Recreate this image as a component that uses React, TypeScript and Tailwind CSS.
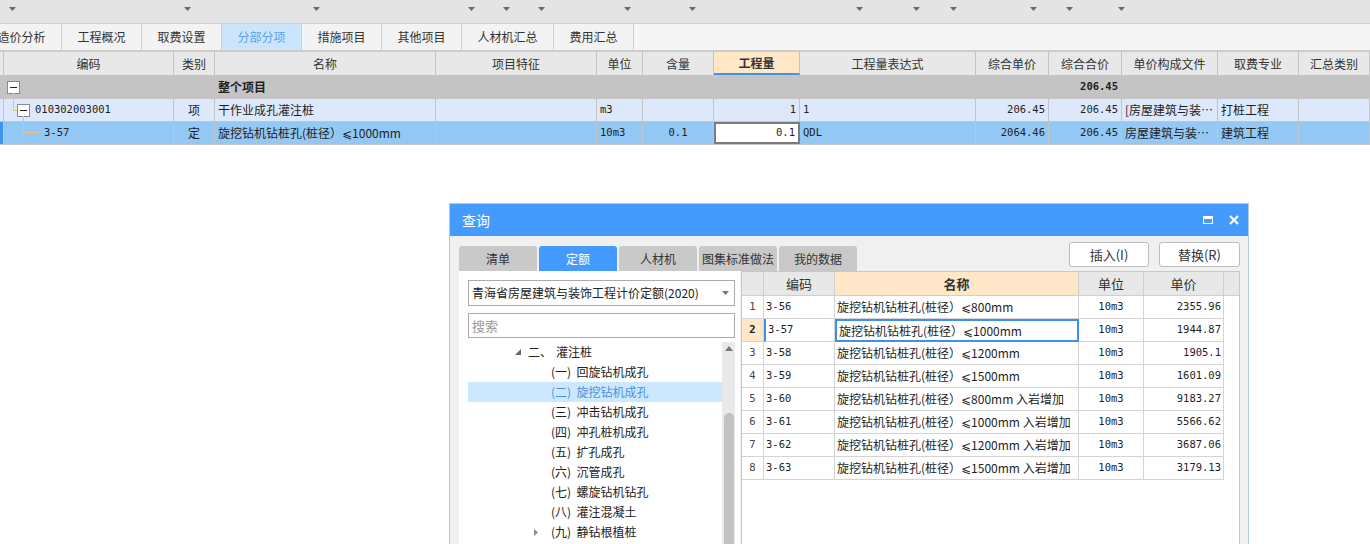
import React from "react";

const ui = "font-['Noto_Sans_CJK_SC','DejaVu_Sans',sans-serif]";
const mono = "font-['DejaVu_Sans_Mono','Noto_Sans_CJK_SC',monospace]";

// dropdown carets along the top toolbar (centre x)
const caretPos = [12, 187, 316, 471, 506, 541, 627, 692, 859, 916, 953, 1033, 1069, 1121];

const topTabs = [
    { t: "造价分析", w: "w-[80px] -ml-[18px]" },
    { t: "工程概况", w: "w-[80px]" },
    { t: "取费设置", w: "w-[80px]" },
    { t: "分部分项", w: "w-[80px]", active: true },
    { t: "措施项目", w: "w-[80px]" },
    { t: "其他项目", w: "w-[80px]" },
    { t: "人材机汇总", w: "w-[92px]" },
    { t: "费用汇总", w: "w-[80px]" },
];

const colW = [
    "w-[4px]", "w-[170px]", "w-[41px]", "w-[221px]", "w-[161px]", "w-[46px]", "w-[71px]",
    "w-[86px]", "w-[176px]", "w-[73px]", "w-[73px]", "w-[96px]", "w-[81px]", "w-[71px]",
];

const heads = [
    "", "编码", "类别", "名称", "项目特征", "单位", "含量", "工程量", "工程量表达式",
    "综合单价", "综合合价", "单价构成文件", "取费专业", "汇总类别",
];

type Cell = {
    c?: React.ReactNode;
    a?: "l" | "c" | "r";
    m?: boolean;
    box?: boolean;
    cls?: string;
};

const treeItems = [
    { t: "(一) 回旋钻机成孔" },
    { t: "(二) 旋挖钻机成孔", sel: true },
    { t: "(三) 冲击钻机成孔" },
    { t: "(四) 冲孔桩机成孔" },
    { t: "(五) 扩孔成孔" },
    { t: "(六) 沉管成孔" },
    { t: "(七) 螺旋钻机钻孔" },
    { t: "(八) 灌注混凝土" },
    { t: "(九) 静钻根植桩", closed: true },
];

const dinge = [
    ["3-56", "旋挖钻机钻桩孔(桩径）⩽800mm", "10m3", "2355.96"],
    ["3-57", "旋挖钻机钻桩孔(桩径）⩽1000mm", "10m3", "1944.87"],
    ["3-58", "旋挖钻机钻桩孔(桩径）⩽1200mm", "10m3", "1905.1"],
    ["3-59", "旋挖钻机钻桩孔(桩径）⩽1500mm", "10m3", "1601.09"],
    ["3-60", "旋挖钻机钻桩孔(桩径）⩽800mm 入岩增加", "10m3", "9183.27"],
    ["3-61", "旋挖钻机钻桩孔(桩径）⩽1000mm 入岩增加", "10m3", "5566.62"],
    ["3-62", "旋挖钻机钻桩孔(桩径）⩽1200mm 入岩增加", "10m3", "3687.06"],
    ["3-63", "旋挖钻机钻桩孔(桩径）⩽1500mm 入岩增加", "10m3", "3179.13"],
];

const Caret = ({ color = "#6b6b6b" }: { color?: string }) => (
    <svg width="7" height="4" viewBox="0 0 7 4" className="shrink-0">
        <path d="M0 0h7L3.5 4z" fill={color} />
    </svg>
);

const MinusBox = ({ className = "" }: { className?: string }) => (
    <div className={`w-[13px] h-[13px] shrink-0 border border-[#8a8a8a] bg-white flex items-center justify-center ${className}`}>
        <div className="w-[7px] h-px bg-[#222]" />
    </div>
);

const DataRow = ({ bg, cells }: { bg: string; cells: Cell[] }) => (
    <div className={`flex h-[23px] border-b border-[#c4c4c4] ${bg}`}>
        {cells.map((c, i) => (
            <div
                key={i}
                className={`${colW[i]} shrink-0 relative flex items-center overflow-hidden whitespace-nowrap text-[#1e1e1e] ${
                    i === 0 ? "px-0" : "px-[3px]"
                } ${c.box ? "border-2 border-[#7b7b7b] bg-white" : "border-r border-[#c4c4c4]"} ${
                    c.a === "r" ? "justify-end" : c.a === "c" ? "justify-center" : "justify-start"
                } ${c.m ? `${mono} text-[10.5px]` : `${ui} text-[12px]`} ${c.cls ?? ""}`}
            >
                {c.c}
            </div>
        ))}
    </div>
);

export default function App() {
    return (
        <div className={`relative w-[1370px] h-[544px] overflow-hidden bg-white ${ui}`}>
            {/* toolbar strip */}
            <div className="h-[24px] bg-[#e4e4e4] border-b border-[#d3d3d3] flex items-start pt-[7px]">
                {caretPos.map((x, i) => (
                    <div key={i} className="flex" style={{ marginLeft: i === 0 ? x - 3.5 : x - caretPos[i - 1] - 7 }}>
                        <Caret />
                    </div>
                ))}
            </div>

            {/* page tabs */}
            <div className="h-[28px] bg-[#f5f5f5] border-b-2 border-[#cdcdcd] flex">
                {topTabs.map((tab) => (
                    <div
                        key={tab.t}
                        className={`${tab.w} shrink-0 h-full flex items-center justify-center border-r border-[#cfcfcf] text-[12px] ${
                            tab.active ? "bg-[#cbe5fc] text-[#5ba2ea]" : "bg-[#f3f3f3] text-[#333]"
                        }`}
                    >
                        {tab.t}
                    </div>
                ))}
            </div>

            {/* grid header */}
            <div className="flex h-[24px] bg-[#e8e8e8] border-b border-[#c4c4c4]">
                {heads.map((h, i) => (
                    <div
                        key={i}
                        className={`${colW[i]} shrink-0 border-r border-[#c4c4c4] flex items-center justify-center text-[12px] text-[#333] ${
                            i === 7 ? "bg-[#ffe7c7] font-bold border-b-2 border-b-[#3d95ef]" : ""
                        }`}
                    >
                        {h}
                    </div>
                ))}
            </div>

            <DataRow
                bg="bg-[#c4c4c4]"
                cells={[
                    {},
                    {
                        c: (
                            <>
                                <MinusBox />
                                <div className="absolute left-[9px] top-[17px] bottom-0 w-px bg-[#f2bf78]" />
                            </>
                        ),
                    },
                    {},
                    { c: "整个项目", cls: "font-bold" },
                    {}, {}, {}, {}, {}, {},
                    { c: "206.45", a: "r", m: true, cls: "font-bold" },
                    {}, {}, {},
                ]}
            />
            <DataRow
                bg="bg-[#dde9fb]"
                cells={[
                    {},
                    {
                        c: (
                            <>
                                <div className="absolute left-[9px] top-0 h-[11px] w-px bg-[#f2bf78]" />
                                <div className="absolute left-[9px] top-[11px] w-[4px] h-px bg-[#f2bf78]" />
                                <MinusBox className="ml-[10px]" />
                                <div className="absolute left-[19px] top-[17px] bottom-0 w-px bg-[#f2bf78]" />
                                <span className={`${mono} text-[10.5px] ml-[5px]`}>010302003001</span>
                            </>
                        ),
                    },
                    { c: "项", a: "c" },
                    { c: "干作业成孔灌注桩" },
                    {},
                    { c: "m3", m: true },
                    {},
                    { c: "1", a: "r", m: true },
                    { c: "1", m: true },
                    { c: "206.45", a: "r", m: true },
                    { c: "206.45", a: "r", m: true },
                    { c: "[房屋建筑与装…" },
                    { c: "打桩工程" },
                    {},
                ]}
            />
            <DataRow
                bg="bg-[#93c8f5]"
                cells={[
                    { cls: "border-l-[3px] border-l-[#3d95ef]" },
                    {
                        c: (
                            <>
                                <div className="absolute left-[19px] top-0 h-[10px] w-px bg-[#f2bf78]" />
                                <div className="absolute left-[19px] top-[10px] w-[17px] h-px bg-[#f2bf78]" />
                                <span className={`${mono} text-[10.5px] ml-[37px]`}>3-57</span>
                            </>
                        ),
                    },
                    { c: "定", a: "c" },
                    { c: "旋挖钻机钻桩孔(桩径）⩽1000mm" },
                    {},
                    { c: "10m3", m: true },
                    { c: "0.1", a: "c", m: true },
                    { c: "0.1", a: "r", m: true, box: true },
                    { c: "QDL", m: true },
                    { c: "2064.46", a: "r", m: true },
                    { c: "206.45", a: "r", m: true },
                    { c: "房屋建筑与装…" },
                    { c: "建筑工程" },
                    {},
                ]}
            />

            {/* 查询 dialog */}
            <div className="absolute left-[449px] top-[203px] w-[800px] h-[360px] border border-[#b9c9de] bg-[#f0f0f0] flex flex-col">
                <div className="h-[32px] shrink-0 bg-[#459bfd] flex items-center pl-[12px] pr-[9px] text-white text-[14px]">
                    <span>查询</span>
                    <div className="ml-auto flex items-center gap-[16px]">
                        <div className="w-[10px] h-[8px] border-[1.5px] border-t-[3px] border-white" />
                        <svg width="10" height="10" viewBox="0 0 10 10">
                            <path d="M1 1l8 8M9 1l-8 8" stroke="white" strokeWidth="2.2" />
                        </svg>
                    </div>
                </div>

                <div className="h-[35px] shrink-0 flex pl-[9px] pr-[8px]">
                    <div className="flex items-end gap-[2px]">
                        {["清单", "定额", "人材机", "图集标准做法", "我的数据"].map((t) => (
                            <div
                                key={t}
                                className={`w-[78px] h-[25px] rounded-t-[3px] flex items-center justify-center text-[12px] ${
                                    t === "定额" ? "bg-[#459bfd] text-white" : "bg-[#c9c9c9] text-[#333]"
                                }`}
                            >
                                {t}
                            </div>
                        ))}
                    </div>
                    <div className="ml-auto mt-[6px] flex gap-[10px]">
                        <div className="w-[80px] h-[25px] bg-white border border-[#bdbdbd] rounded-[3px] flex items-center justify-center text-[13px] text-[#333]">
                            插入(I)
                        </div>
                        <div className="w-[81px] h-[25px] bg-white border border-[#bdbdbd] rounded-[3px] flex items-center justify-center text-[13px] text-[#333]">
                            替换(R)
                        </div>
                    </div>
                </div>

                <div className="flex flex-1 pl-[9px] pr-[8px]">
                    {/* left: library + chapter tree */}
                    <div className="w-[281px] shrink-0 bg-white flex flex-col pl-[9px] pr-[5px] pt-[9px]">
                        <div className="h-[26px] border border-[#ababab] flex items-center pl-[3px] pr-[5px] text-[12px] text-[#222]">
                            <span>青海省房屋建筑与装饰工程计价定额(2020)</span>
                            <div className="ml-auto flex">
                                <Caret color="#777" />
                            </div>
                        </div>
                        <div className="mt-[7px] h-[25px] border border-[#ababab] flex items-center pl-[3px] text-[13px] text-[#9a9a9a]">
                            搜索
                        </div>
                        <div className="mt-[4px] flex flex-1">
                            <div className="flex-1">
                                <div className="h-[20px] flex items-center text-[12px] text-[#222]">
                                    <svg width="6" height="6" viewBox="0 0 6 6" className="ml-[47px]">
                                        <path d="M6 0v6H0z" fill="#666" />
                                    </svg>
                                    <span className="ml-[7px]">二、</span>
                                    <span className="ml-[4px]">灌注桩</span>
                                </div>
                                {treeItems.map((it) => (
                                    <div
                                        key={it.t}
                                        className={`h-[20px] flex items-center text-[12px] whitespace-pre ${
                                            it.sel ? "bg-[#cce8ff] text-[#4a90e2]" : "text-[#222]"
                                        }`}
                                    >
                                        {it.closed ? (
                                            <svg width="4" height="7" viewBox="0 0 4 7" className="ml-[66px] mr-[13px]">
                                                <path d="M0 0l4 3.5L0 7z" fill="#8a8a8a" />
                                            </svg>
                                        ) : (
                                            <span className="w-[83px] shrink-0" />
                                        )}
                                        {it.t.replace(") ", ")  ")}
                                    </div>
                                ))}
                            </div>
                            <div className="w-[13px] shrink-0 bg-[#e9e9e9] flex flex-col items-center">
                                <svg width="8" height="5" viewBox="0 0 8 5" className="mt-[4px]">
                                    <path d="M0 5L4 0l4 5z" fill="#777" />
                                </svg>
                                <div className="mt-[62px] w-[10px] flex-1 bg-[#c2c2c2] rounded-t-[5px]" />
                            </div>
                        </div>
                    </div>

                    {/* right: quota list */}
                    <div className="flex-1 ml-[1px] bg-white border border-[#c8c8c8]">
                        <div className="flex h-[24px] bg-[#e8e8e8] border-b border-[#cfcfcf] text-[13px] text-[#333]">
                            <div className="w-[22px] shrink-0 border-r border-[#cfcfcf]" />
                            <div className="w-[71px] shrink-0 border-r border-[#cfcfcf] flex items-center justify-center">编码</div>
                            <div className="w-[244px] shrink-0 border-r border-[#cfcfcf] bg-[#ffe7c7] font-bold flex items-center justify-center">名称</div>
                            <div className="w-[65px] shrink-0 border-r border-[#cfcfcf] flex items-center justify-center">单位</div>
                            <div className="w-[80px] shrink-0 border-r border-[#cfcfcf] flex items-center justify-center">单价</div>
                        </div>
                        {dinge.map((r, i) => {
                            const sel = i === 1;
                            return (
                                <div key={r[0]} className="flex h-[23px] text-[#1e1e1e]">
                                    <div
                                        className={`w-[22px] shrink-0 border-r border-b border-[#d4d4d4] flex items-center justify-center ${mono} text-[10.5px] ${
                                            sel ? "bg-[#ffe7c7] font-bold text-[#222]" : "text-[#444]"
                                        }`}
                                    >
                                        {i + 1}
                                    </div>
                                    <div
                                        className={`w-[71px] shrink-0 border-r border-b border-[#d4d4d4] flex items-center px-[2px] ${mono} text-[10.5px] ${
                                            sel ? "border-l-2 border-l-[#3d8ff0]" : ""
                                        }`}
                                    >
                                        {r[0]}
                                    </div>
                                    <div
                                        className={`w-[244px] shrink-0 flex items-center px-[2px] text-[12px] whitespace-nowrap overflow-hidden ${
                                            sel ? "border-2 border-[#3d8ff0]" : "border-r border-b border-[#d4d4d4]"
                                        }`}
                                    >
                                        {r[1]}
                                    </div>
                                    <div className={`w-[65px] shrink-0 border-r border-b border-[#d4d4d4] flex items-center justify-center ${mono} text-[10.5px]`}>
                                        {r[2]}
                                    </div>
                                    <div className={`w-[80px] shrink-0 border-r border-b border-[#d4d4d4] flex items-center justify-end px-[2px] ${mono} text-[10.5px]`}>
                                        {r[3]}
                                    </div>
                                </div>
                            );
                        })}
                    </div>
                </div>
            </div>
        </div>
    );
}
